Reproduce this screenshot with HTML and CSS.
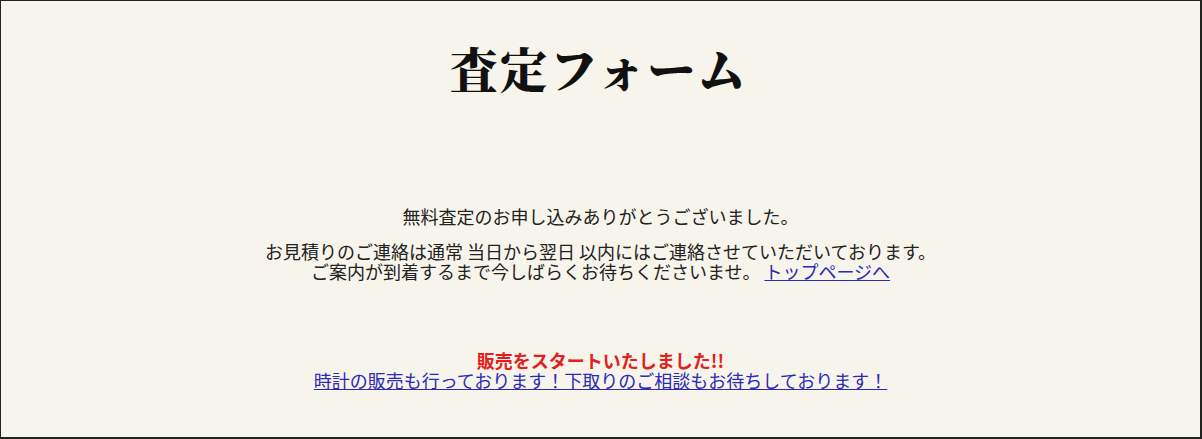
FILE: index.html
```html
<!DOCTYPE html>
<html lang="ja">
<head>
<meta charset="utf-8">
<title>査定フォーム</title>
<link rel="stylesheet" href="styles.css">
</head>
<body>
<div class="frame">
  <h1 class="title">査定フォーム</h1>
  <div class="message">
    <p class="thanks">無料査定のお申し込みありがとうございました。</p>
    <p class="notice">お見積りのご連絡は通常 当日から翌日 以内にはご連絡させていただいております。<br>ご案内が到着するまで今しばらくお待ちくださいませ。 <a href="#" class="link">トップページへ</a></p>
    <p class="sales"><span class="sales-head">販売をスタートいたしました!!</span><br><a href="#" class="link">時計の販売も行っております！下取りのご相談もお待ちしております！</a></p>
  </div>
</div>
</body>
</html>
```

FILE: styles.css
```css
html, body {
  margin: 0;
  padding: 0;
  background: #f7f4ec;
}
.frame {
  box-sizing: border-box;
  width: 1202px;
  height: 439px;
  border-top: 1px solid #222;
  border-left: 1px solid #222;
  border-right: 2px solid #222;
  border-bottom: 2px solid #222;
  background: #f7f4ec;
  padding-top: 41px;
  text-align: center;
  font-family: "Noto Sans CJK JP", "Noto Sans", sans-serif;
  color: #222;
}
.title {
  margin: 0;
  font-family: "Noto Serif CJK JP", "IPAexMincho", "Noto Sans CJK JP", serif;
  font-size: 48px;
  line-height: 52px;
  font-weight: 900;
  letter-spacing: 2px;
  padding-right: 4px;
  color: #111;
}
.message {
  margin-top: 112px;
  font-size: 18px;
  line-height: 20px;
}
.message p {
  margin: 0;
}
.thanks {
  margin-bottom: 15px !important;
}
.sales {
  margin-top: 69px !important;
}
.sales-head {
  color: #e3201b;
  font-weight: bold;
}
.link {
  color: #2b2bb5;
  text-decoration: underline;
}
```
